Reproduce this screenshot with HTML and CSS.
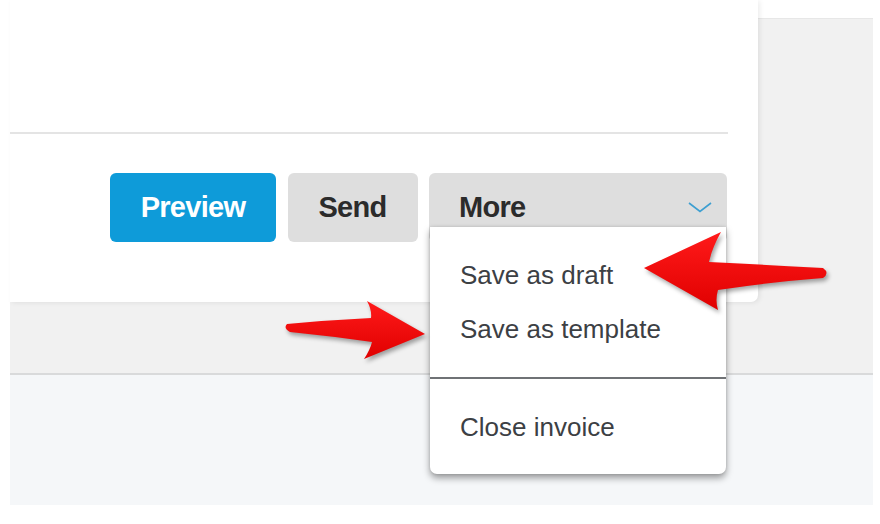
FILE: index.html
```html
<!DOCTYPE html>
<html lang="en">
<head>
<meta charset="utf-8">
<title>Invoice actions</title>
<link rel="stylesheet" href="styles.css">
</head>
<body>
<div class="page">
  <div class="top">
    <div class="card">
      <div class="card-head"></div>
      <div class="divider"></div>
      <div class="actions">
        <button class="btn btn-primary btn-preview">Preview</button>
        <button class="btn btn-secondary btn-send">Send</button>
        <div class="more-wrap">
          <button class="btn btn-secondary btn-more">
            <span>More</span>
            <svg class="chevron" width="24" height="12" viewBox="0 0 24 12"><path d="M1 2 L12 10.5 L23 2" fill="none" stroke="#3d9fd1" stroke-width="1.6"/></svg>
          </button>
          <ul class="menu">
            <li class="menu-item">Save as draft</li>
            <li class="menu-item">Save as template</li>
            <li class="menu-sep"></li>
            <li class="menu-item">Close invoice</li>
          </ul>
        </div>
      </div>
    </div>
  </div>
  <div class="lower"></div>
</div>
<svg class="arrows" width="880" height="524" viewBox="0 0 880 524">
  <defs>
    <linearGradient id="red" x1="0" y1="0" x2="0" y2="1">
      <stop offset="0" stop-color="#ff1a1a"/>
      <stop offset="1" stop-color="#e00000"/>
    </linearGradient>
  </defs>
  <path d="M644,268 L721,232 Q712,248 709,262 Q770,265 823,268 Q830,273 823,278 Q770,282 718,290 Q715,300 718,310 Z" fill="url(#red)"/>
  <path d="M287,324 Q330,320 371,318 Q372,310 367,301 L425,334 L364,359 Q370,350 372,342 Q330,336 290,332 Q283,328 287,324 Z" fill="url(#red)"/>
</svg>
</body>
</html>
```

FILE: styles.css
```css
* { box-sizing: border-box; }

html, body {
  margin: 0;
  padding: 0;
  background: #ffffff;
  width: 880px;
  height: 524px;
  overflow: hidden;
  font-family: "Liberation Sans", Arial, Helvetica, sans-serif;
}

.page {
  margin-left: 10px;
  width: 863px;
}

.top {
  height: 375px;
  background: linear-gradient(to bottom, #ffffff 0 18px, #e7e7e7 18px 19px, #f1f1f1 19px);
  border-bottom: 2px solid #d9dadb;
}

.card {
  width: 748px;
  height: 302px;
  background: #ffffff;
  border-bottom-right-radius: 7px;
  padding-right: 31px;
  box-shadow: 2px 1px 5px rgba(0, 0, 0, 0.07);
  position: relative;
}

.card-head {
  height: 132px;
}

.divider {
  height: 2px;
  background: #e4e4e4;
  margin-right: -1px;
}

.actions {
  margin-top: 39px;
  display: flex;
  justify-content: flex-end;
  gap: 11.5px;
}

.btn {
  height: 69px;
  border: none;
  border-radius: 6px;
  font-family: "Liberation Sans", Arial, Helvetica, sans-serif;
  font-weight: bold;
  font-size: 29px;
  letter-spacing: -0.7px;
  padding: 0;
  margin: 0;
  color: #2b2b2b;
}

.btn-primary {
  background: #0e9bd9;
  color: #ffffff;
}

.btn-secondary {
  background: #dedede;
}

.btn-preview { width: 166px; }
.btn-send { width: 130px; }

.more-wrap {
  position: relative;
  width: 298px;
}

.btn-more {
  width: 298px;
  display: flex;
  align-items: center;
  justify-content: space-between;
  padding: 0 15px 0 30px;
  text-align: left;
}

.btn-more span {
  margin-top: -1px;
}

.chevron {
  margin-top: -1px;
}

.menu {
  position: absolute;
  left: 1px;
  top: 54px;
  width: 296px;
  margin: 0;
  padding: 21px 0 20px;
  list-style: none;
  background: #ffffff;
  border-radius: 0 0 7px 7px;
  box-shadow: 0 4px 7px rgba(0, 0, 0, 0.38), 0 0 3px rgba(0, 0, 0, 0.12);
  z-index: 2;
}

.menu-item {
  height: 54px;
  line-height: 54px;
  padding-left: 30px;
  font-size: 26px;
  color: #3c4044;
}

.menu-sep {
  height: 2px;
  margin: 21px 0;
  background: #6f7275;
}

.lower {
  height: 130px;
  background: #f5f7f9;
}

.arrows {
  position: absolute;
  left: 0;
  top: 0;
  z-index: 5;
  pointer-events: none;
  filter: drop-shadow(2px 3px 2px rgba(0, 0, 0, 0.35));
}
```
